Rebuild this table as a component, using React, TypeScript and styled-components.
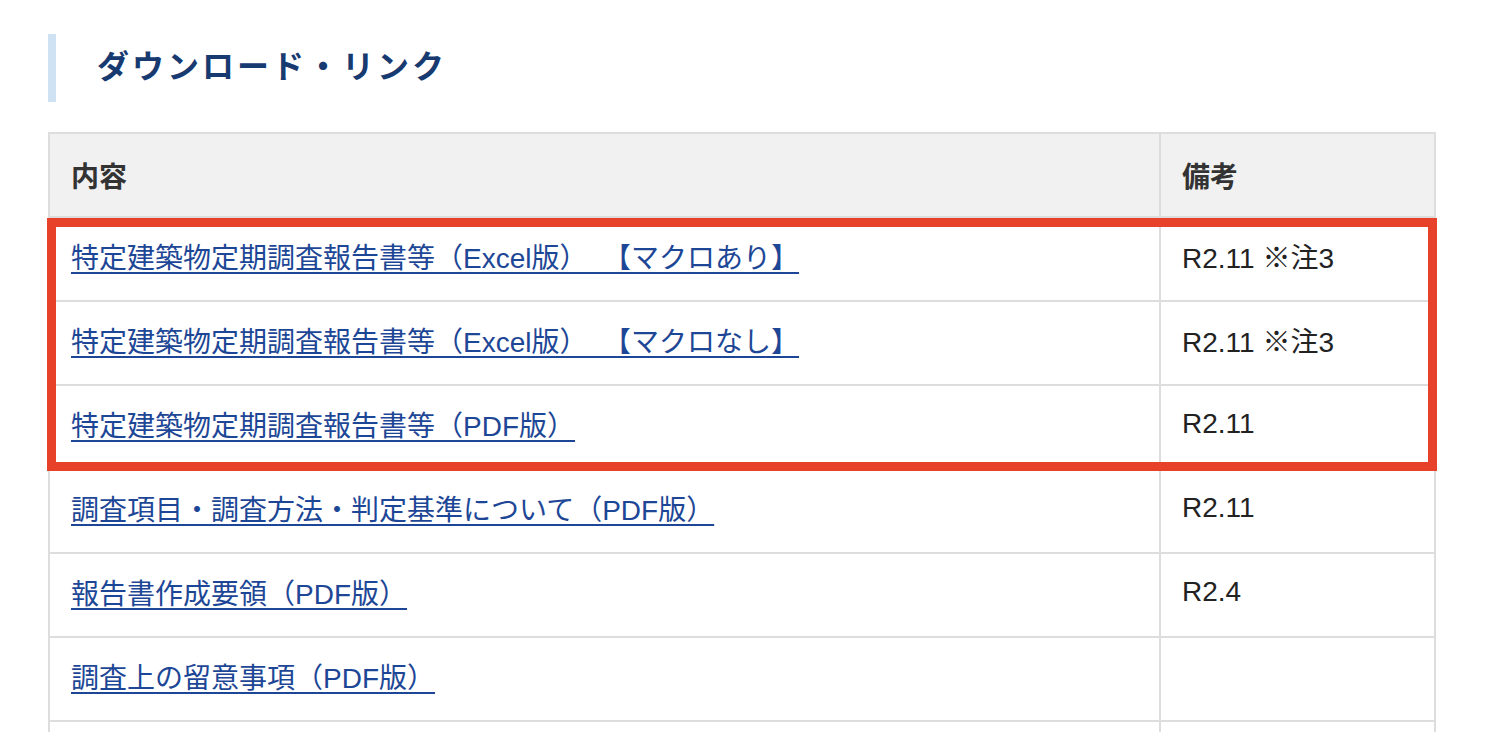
import styled, { createGlobalStyle } from "styled-components";

const GlobalStyle = createGlobalStyle`
  body {
    margin: 0;
    background: #fff;
    font-family: "Liberation Sans", "Noto Sans CJK JP", sans-serif;
  }
`;

const Page = styled.div`
  padding: 34px 0 0 48px;
`;

const Heading = styled.h2`
  margin: 0;
  height: 68px;
  line-height: 66px;
  border-left: 8px solid #cfe2f3;
  padding-left: 41px;
  font-size: 32px;
  font-weight: 700;
  letter-spacing: 3px;
  color: #173a70;
`;

const TableWrap = styled.div`
  position: relative;
  width: 1388px;
  margin-top: 30px;
`;

const Table = styled.table`
  width: 100%;
  table-layout: fixed;
  border-collapse: collapse;
  border: 2px solid #dddddd;
  font-size: 28px;
  text-spacing-trim: space-all;
`;

const HeadCell = styled.th<{ $w?: number }>`
  ${(p) => (p.$w ? `width: ${p.$w}px;` : "")}
  height: 82px;
  padding: 0 21px;
  text-align: left;
  font-weight: 700;
  color: #333;
  background: #f1f1f1;
  border: 2px solid #dddddd;
`;

const Cell = styled.td`
  height: 76px;
  padding: 0 21px 6px;
  color: #222;
  border: 2px solid #dddddd;
`;

const DocLink = styled.a`
  color: #1d4796;
  text-decoration: underline;
  text-underline-offset: 4px;
  text-decoration-thickness: 2px;
`;

const Highlight = styled.div`
  position: absolute;
  top: 86px;
  left: -1px;
  width: 1390px;
  height: 253px;
  box-sizing: border-box;
  border: 9px solid #e8412a;
  pointer-events: none;
`;

const rows = [
  { title: "特定建築物定期調査報告書等（Excel版） \u00a0【マクロあり】", note: "R2.11 ※注3" },
  { title: "特定建築物定期調査報告書等（Excel版） \u00a0【マクロなし】", note: "R2.11 ※注3" },
  { title: "特定建築物定期調査報告書等（PDF版）", note: "R2.11" },
  { title: "調査項目・調査方法・判定基準について（PDF版）", note: "R2.11" },
  { title: "報告書作成要領（PDF版）", note: "R2.4" },
  { title: "調査上の留意事項（PDF版）", note: "" },
  { title: "", note: "" },
];

const App = () => {
  return (
    <>
      <GlobalStyle />
      <Page>
        <Heading>ダウンロード・リンク</Heading>
        <TableWrap>
          <Table>
            <thead>
              <tr>
                <HeadCell $w={1067}>内容</HeadCell>
                <HeadCell>備考</HeadCell>
              </tr>
            </thead>
            <tbody>
              {rows.map((r, i) => (
                <tr key={i}>
                  <Cell>{r.title && <DocLink href="#">{r.title}</DocLink>}</Cell>
                  <Cell>{r.note}</Cell>
                </tr>
              ))}
            </tbody>
          </Table>
          <Highlight />
        </TableWrap>
      </Page>
    </>
  );
};

export default App;
